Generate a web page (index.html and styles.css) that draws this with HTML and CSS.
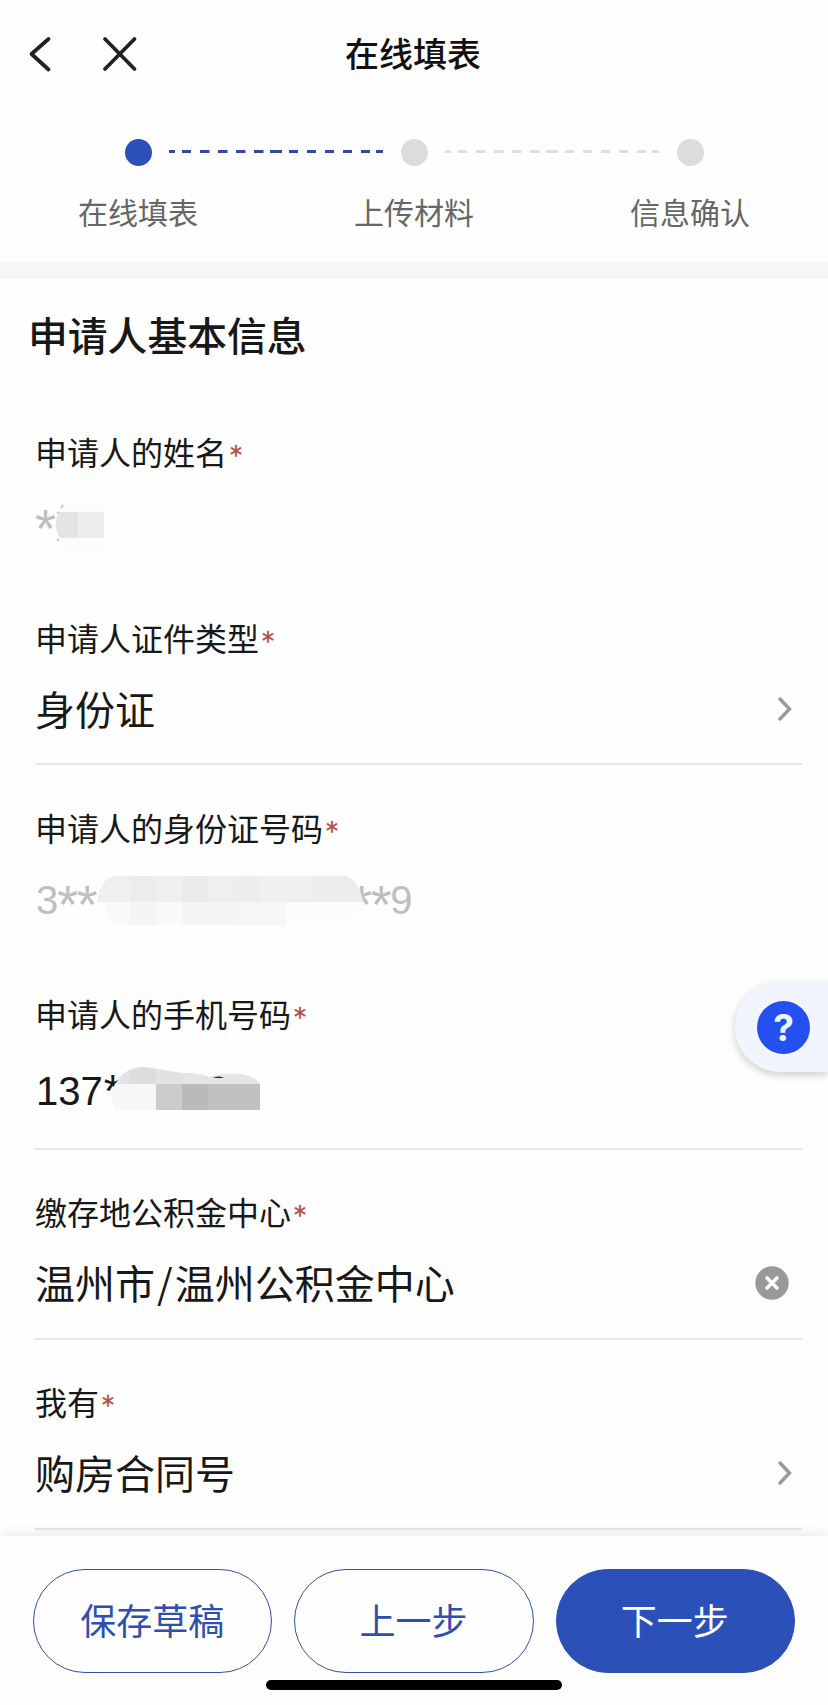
FILE: index.html
```
<!DOCTYPE html>
<html lang="zh-CN">
<head>
  <meta charset="UTF-8" />
  <meta name="viewport" content="width=device-width, initial-scale=1.0" />
  <title>在线填表</title>
  <link rel="stylesheet" href="styles.css">
</head>
<body>

  <!-- 导航栏 -->
  <header class="navbar">
    <svg class="nav-icon" width="120" height="40" viewBox="0 0 120 40">
      <path d="M20.5 5 L3.5 20 L20.5 35.5" />
      <path d="M77 5 L106.5 35 M106.5 5 L77 35" />
    </svg>
    <h1>在线填表</h1>
  </header>

  <!-- 步骤 -->
  <div class="steps">
    <div class="step active">
      <i class="dot"></i>
      <span>在线填表</span>
      <svg class="dash" width="214" height="3"><path d="M0 1.5 H214" /></svg>
    </div>
    <div class="step">
      <i class="dot"></i>
      <span>上传材料</span>
      <svg class="dash" width="214" height="3"><path d="M0 1.5 H214" /></svg>
    </div>
    <div class="step">
      <i class="dot"></i>
      <span>信息确认</span>
    </div>
  </div>

  <!-- 表单 -->
  <main class="form">
    <h2>申请人基本信息</h2>

    <div class="field readonly">
      <label>申请人的姓名<em>*</em></label>
      <div class="value num"><b>*</b>
        <svg class="mask mask-name" width="52" height="54">
          <path d="M49 0 H24 Q8 2 3 12 V41 Q12 53 28 54 H49Z" fill="#fcfcfc" />
          <path d="M23 12 H4 Q-3 25 5 38 H23Z" fill="#e4e4e4" />
          <path d="M23 12 H49 V38 H23Z" fill="#eeeeee" />
          <path d="M6 8 L8 5 M2 13 L4 12 M2 39 L4 41" stroke="#bbb" stroke-width="1.5" />
        </svg>
      </div>
    </div>

    <div class="field">
      <label>申请人证件类型<em>*</em></label>
      <div class="value">身份证
        <svg class="arrow" width="14" height="26"><path d="M2 3 L11.5 13 L2 23" /></svg>
      </div>
    </div>

    <div class="field readonly">
      <label>申请人的身份证号码<em>*</em></label>
      <div class="value num">3<b>**</b><span class="hidden-part"></span><b>**</b>9
        <svg class="mask mask-id" width="268" height="50">
          <path d="M7 26 H266 Q262 49 240 49 H24 Q10 47 7 26Z" fill="#fcfcfc" />
          <path d="M0 26 Q4 0 20 0 H248 Q262 4 266 26Z" fill="#efefef" />
          <path d="M33 0 H59 V26 H33Z" fill="#ececec" />
          <path d="M85 0 H111 V26 H85Z" fill="#ebebeb" />
          <path d="M137 0 H163 V26 H137Z" fill="#ededed" />
          <path d="M163 0 H215 V26 H163Z" fill="#f0f0f0" />
          <path d="M215 0 H248 Q262 4 266 26 H215Z" fill="#ededed" />
          <path d="M7 26 H33 V49 H24 Q10 47 7 26Z" fill="#f9f9f9" />
          <path d="M33 26 H59 V49 H33Z" fill="#f5f5f5" />
          <path d="M59 26 H85 V49 H59Z" fill="#f9f9f9" />
          <path d="M85 26 H137 V49 H85Z" fill="#f4f4f4" />
          <path d="M137 26 H189 V49 H137Z" fill="#f6f6f6" />
        </svg>
      </div>
    </div>

    <div class="field phone">
      <label>申请人的手机号码<em>*</em></label>
      <div class="value num">137<b>*</b>
        <svg class="mask mask-phone" width="150" height="44">
          <path d="M4 17 C12 5 20 0 32 0 C50 2 60 4 70 6 C82 6 92 7 98 10 C120 4 142 6 149 17Z" fill="#e2e2e2" />
          <path d="M19 4 Q26 0 32 0 L45 2 V17 H19Z" fill="#dddddd" />
          <path d="M71 6 C82 6 92 7 98 10 C120 4 142 6 149 17 H71Z" fill="#e5e5e5" />
          <path d="M4 17 H45 V43 H5 Q-3 29 4 17Z" fill="#f7f7f7" />
          <path d="M45 17 H71 V43 H45Z" fill="#cbcbcb" />
          <path d="M71 17 H97 V43 H71Z" fill="#bababa" />
          <path d="M97 17 H149 V43 H97Z" fill="#c1c1c1" />
          <path d="M102 11 Q108 8 113 11Z" fill="#222" />
        </svg>
      </div>
    </div>

    <div class="field low">
      <label>缴存地公积金中心<em>*</em></label>
      <div class="value"><div>温州市<span class="slash">/</span>温州公积金中心</div>
        <svg class="clear" width="34" height="34">
          <circle cx="17" cy="17" r="16.7" />
          <path d="M12 12 L22 22 M22 12 L12 22" />
        </svg>
      </div>
    </div>

    <div class="field low">
      <label>我有<em>*</em></label>
      <div class="value">购房合同号
        <svg class="arrow" width="14" height="26"><path d="M2 3 L11.5 13 L2 23" /></svg>
      </div>
    </div>
  </main>

  <!-- 悬浮帮助 -->
  <div class="help"><span>?</span></div>

  <!-- 底部按钮 -->
  <footer class="footer">
    <div class="buttons">
      <button>保存草稿</button>
      <button>上一步</button>
      <button class="primary">下一步</button>
    </div>
    <div class="home-bar"></div>
  </footer>

</body>
</html>
```
FILE: styles.css
```
* { margin: 0; padding: 0; box-sizing: border-box; }
html, body {
  width: 100%;
  height: 1705px;
  overflow: hidden;
}
body {
  position: relative;
  background: #fefefe;
  color: #181818;
  font-family: "Noto Sans CJK SC", sans-serif;
}

.navbar {
  position: relative;
  height: 108px;
  padding: 0 2px 2px 0;
  display: flex;
  align-items: center;
  justify-content: center;
}
.navbar h1 {
  font-size: 34px;
  font-weight: 500;
  line-height: 40px;
  color: #111;
}
.nav-icon {
  position: absolute;
  left: 28px;
  top: 34px;
  fill: none;
  stroke: #222;
  stroke-width: 3.8;
  stroke-linecap: round;
  stroke-linejoin: round;
}

.steps {
  height: 171px;
  padding-top: 31px;
  display: grid;
  grid-template-columns: repeat(3, 276px);
  border-bottom: 17px solid #f5f6f9;
}
.step {
  position: relative;
  display: flex;
  flex-direction: column;
  align-items: center;
}
.dot {
  width: 27px;
  height: 27px;
  border-radius: 50%;
  background: #dcdcdc;
}
.step.active .dot { background: #2b50b8; }
.step span {
  margin-top: 25px;
  font-size: 30px;
  line-height: 40px;
  color: #666;
}
.dash {
  position: absolute;
  left: 169px;
  top: 11px;
  stroke: #dedede;
  stroke-width: 3;
  stroke-dasharray: 6 7 9 9 9.5 8.5 9.5 8.5 9.5 8.5 9.5 6.5 12 7 9 9 9 9 9 9 9 9 9 6 7 0;
}
.step.active .dash { stroke: #35499a; }

.form { padding: 0 26px 0 35px; }
.form h2 {
  height: 110px;
  margin-left: -7px;
  padding-top: 27px;
  font-size: 39.8px;
  font-weight: 500;
  line-height: 56px;
}

.field {
  height: 190px;
  padding-top: 42px;
  border-bottom: 2px solid #e6e6e6;
}
.field.readonly { height: 186px; border-bottom: none; }
.field.phone { height: 199px; }
.field.low { padding-top: 41px; }
.field label {
  display: flex;
  height: 40px;
  font-size: 32px;
  line-height: 40px;
}
.field em {
  margin: 9px 0 0 3px;
  color: #b94a48;
  font: normal 24px/31px "DejaVu Sans", sans-serif;
  -webkit-text-stroke: 0.5px #b94a48;
}
.value {
  position: relative;
  display: flex;
  align-items: center;
  justify-content: space-between;
  height: 56px;
  margin-top: 23px;
  font-size: 40px;
  line-height: 56px;
  white-space: nowrap;
}
.value.num {
  justify-content: flex-start;
  margin-top: 25px;
  padding-left: 1px;
  font-family: "Liberation Sans", sans-serif;
}
.phone .num { margin-top: 30px; }
.readonly .value { color: #bfbfbf; }
.num b {
  margin-top: 7px;
  font-weight: normal;
  font-size: 54px;
  line-height: 40px;
  letter-spacing: -1.5px;
}
.phone .num b { margin: 0 0 0 1px; font-size: 46px; }
.readonly .num b:first-child { margin-left: -1px; }
.hidden-part { width: 255px; }
.slash { margin: 0 2px; }

.arrow {
  margin: 2px 10px 0 0;
  fill: none;
  stroke: #999;
  stroke-width: 3.4;
  stroke-linecap: round;
}
.clear { margin: 2px 13px 0 0; fill: #999; }
.clear path { stroke: #fff; stroke-width: 3.6; stroke-linecap: round; }

/* 打码 */
.mask { position: absolute; top: 4px; }
.mask-name { left: 20px; }
.mask-id { left: 62px; }
.mask-phone { left: 76px; }

.help {
  position: absolute;
  right: 0;
  top: 982px;
  width: 93px;
  height: 90px;
  padding-left: 22px;
  display: flex;
  align-items: center;
  border-radius: 46px 0 0 46px;
  background: #f1f5fe;
  box-shadow: 0 3px 8px rgba(0, 0, 0, 0.2);
}
.help span {
  width: 53px;
  height: 53px;
  border-radius: 50%;
  background: #2450f0;
  color: #f1f5fe;
  font: bold 37px/54px Inter, sans-serif;
  text-align: center;
}

.footer {
  position: absolute;
  left: 0;
  bottom: 0;
  width: 100%;
  height: 169px;
  padding: 33px 33px 0;
  background: #fefefe;
  box-shadow: 0 -2px 12px rgba(0, 0, 0, 0.09);
}
.buttons { display: flex; gap: 22px; }
.buttons button {
  flex: 1;
  height: 104px;
  padding: 0 1px 4px 0;
  border: 1.5px solid #3350a5;
  border-radius: 52px;
  background: #fefefe;
  color: #2f4fae;
  font-family: inherit;
  font-size: 36px;
}
.buttons .primary {
  background: #2b50b8;
  border-color: #2b50b8;
  color: #fff;
}
.home-bar {
  width: 296px;
  height: 10px;
  margin: 7px auto 0;
  border-radius: 5px;
  background: #000;
}
```
